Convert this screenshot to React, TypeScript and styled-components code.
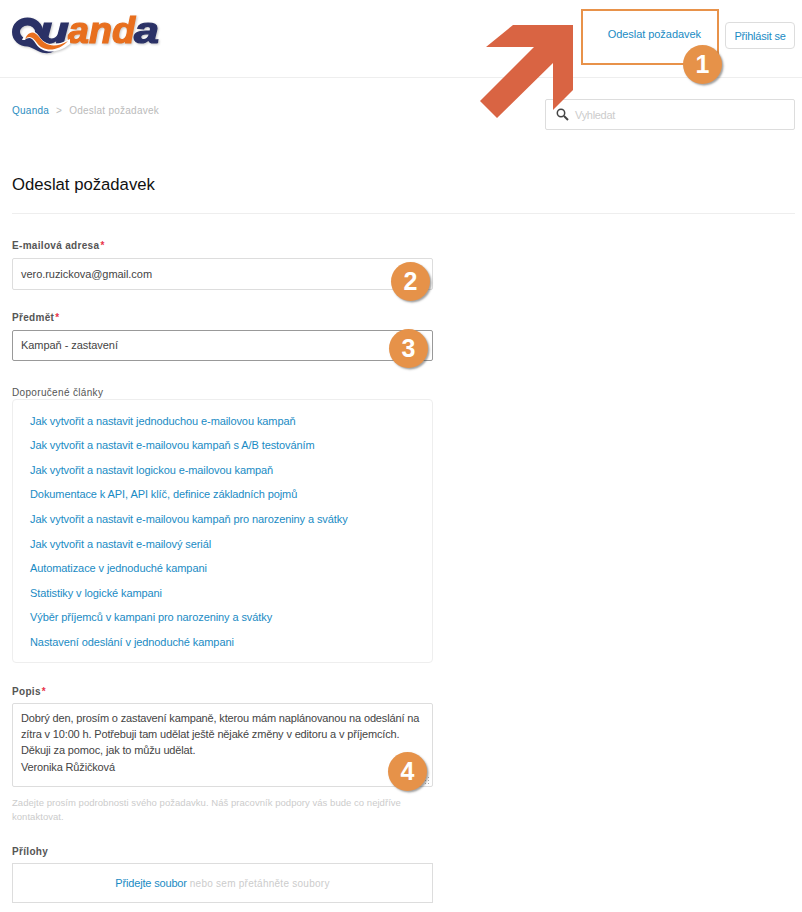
import styled, { createGlobalStyle } from "styled-components";

const GlobalStyle = createGlobalStyle`
  html, body {
    margin: 0;
    background: #fff;
    height: 912px;
    overflow: hidden;
  }
  body {
    font-family: "Liberation Sans", Arial, sans-serif;
    font-size: 11px;
    color: #444;
  }
  * { box-sizing: border-box; }
`;

const Page = styled.div`
  position: relative;
  width: 802px;
  height: 912px;
  overflow: hidden;
`;

const Header = styled.header`
  height: 78px;
  border-bottom: 1px solid #eee;
  display: flex;
  align-items: flex-start;
  justify-content: space-between;
  padding: 0 7px 0 12px;
`;

const LogoWrap = styled.div`
  padding-top: 8px;

  svg {
    display: block;
    filter: drop-shadow(1px 1px 1px rgba(0, 0, 0, 0.22));
  }
`;

const Nav = styled.nav`
  display: flex;
  align-items: flex-start;
`;

const NavLink = styled.a`
  color: #1a8bc4;
  font-size: 11px;
  letter-spacing: -0.05px;
  margin-top: 28px;
  margin-right: 24px;
`;

const LoginButton = styled.button`
  margin-top: 22px;
  width: 70px;
  height: 27px;
  border: 1px solid #ddd;
  border-radius: 4px;
  background: #fff;
  color: #1a8bc4;
  font-family: inherit;
  font-size: 11px;
  letter-spacing: -0.22px;
  padding: 0;
`;

const SubBar = styled.div`
  display: flex;
  justify-content: space-between;
  padding: 21px 7px 0 12px;
`;

const Crumbs = styled.div`
  display: flex;
  gap: 7px;
  padding-top: 6px;
  font-size: 10px;
  letter-spacing: 0.25px;
  color: #bbb;
  line-height: 12px;
`;

const CrumbLink = styled.a`
  color: #2d8ebf;
`;

const SearchBox = styled.div`
  position: relative;
  width: 250px;
  height: 31px;
  border: 1px solid #ddd;
  border-radius: 2px;
  display: flex;
  align-items: center;
  gap: 6px;
  padding-left: 10px;
  color: #ccc;
  font-size: 11px;
  letter-spacing: -0.3px;
`;

const Main = styled.main`
  padding: 0 7px 0 12px;
`;

const Title = styled.h1`
  margin: 45px 0 0;
  height: 39px;
  border-bottom: 1px solid #eee;
  font-size: 16.7px;
  font-weight: 400;
  line-height: 20px;
  color: #111;
`;

const Form = styled.form`
  width: 421px;
  padding-top: 26px;
`;

const Label = styled.label<{ $plain?: boolean }>`
  display: block;
  font-size: 10px;
  line-height: 12px;
  letter-spacing: ${(p) => (p.$plain ? 0.33 : 0.32)}px;
  font-weight: ${(p) => (p.$plain ? 400 : 700)};
  color: #555;
`;

const Req = styled.span`
  color: #e8334a;
  margin-left: 1px;
`;

const Field = styled.div<{ $focused?: boolean; $h: number }>`
  height: ${(p) => p.$h}px;
  margin-top: 6px;
  border: 1px solid ${(p) => (p.$focused ? "#999" : "#ddd")};
  border-radius: 2px;
  padding: 0 8px 1px;
  display: flex;
  align-items: center;
  font-size: 11px;
  letter-spacing: -0.05px;
  color: #444;
`;

const Group = styled.div<{ $top: number }>`
  margin-top: ${(p) => p.$top}px;
`;

const Articles = styled.div`
  height: 264px;
  border: 1px solid #eee;
  border-radius: 4px;
  padding: 8.6px 17px 8px;
  display: flex;
  flex-direction: column;
  justify-content: space-between;
`;

const ArticleLink = styled.a`
  color: #1a8bc4;
  font-size: 11px;
  line-height: 24px;
  letter-spacing: -0.09px;
`;

const TextArea = styled.div`
  position: relative;
  height: 84px;
  margin-top: 5px;
  border: 1px solid #ddd;
  border-radius: 2px;
  padding: 6px 8px;
  font-size: 11px;
  line-height: 16.2px;
  letter-spacing: -0.15px;
  color: #444;
`;

const Grip = styled.span`
  position: absolute;
  right: 1px;
  bottom: 1px;
  width: 7px;
  height: 9px;
  background-image: radial-gradient(#aaa 1px, transparent 1px);
  background-size: 3px 3px;
`;

const Hint = styled.p`
  margin: 9px 0 0;
  font-size: 9.5px;
  line-height: 14px;
  letter-spacing: 0.04px;
  color: #ccc;
`;

const DropZone = styled.div`
  height: 40px;
  margin-top: 5px;
  border: 1px solid #ddd;
  display: flex;
  align-items: center;
  justify-content: center;
  gap: 3px;
  font-size: 10px;
  letter-spacing: 0.26px;
  color: #ccc;
`;

const DropLink = styled.a`
  color: #1a8bc4;
  font-size: 11px;
  letter-spacing: -0.17px;
`;

const Highlight = styled.div`
  position: absolute;
  left: 581px;
  top: 9px;
  width: 138px;
  height: 56px;
  border: 2px solid #e8924a;
`;

const Arrow = styled.svg`
  position: absolute;
  left: 480px;
  top: 24px;
`;

const Badge = styled.div<{ $x: number; $y: number }>`
  position: absolute;
  left: ${(p) => p.$x}px;
  top: ${(p) => p.$y}px;
  width: 39px;
  height: 39px;
  border-radius: 50%;
  background: #e69249;
  color: #fff;
  font-size: 25px;
  font-weight: 700;
  display: flex;
  align-items: center;
  justify-content: center;
  box-shadow: 1.5px 1.5px 2px rgba(70, 70, 70, 0.5);
`;

const LogoLetters = styled.text<{ $color: string }>`
  font-family: "Liberation Sans", sans-serif;
  font-style: italic;
  font-weight: 700;
  font-size: 36px;
  fill: ${(p) => p.$color};
  stroke: ${(p) => p.$color};
  stroke-width: 1.2px;
`;

const articles = [
  "Jak vytvořit a nastavit jednoduchou e-mailovou kampaň",
  "Jak vytvořit a nastavit e-mailovou kampaň s A/B testováním",
  "Jak vytvořit a nastavit logickou e-mailovou kampaň",
  "Dokumentace k API, API klíč, definice základních pojmů",
  "Jak vytvořit a nastavit e-mailovou kampaň pro narozeniny a svátky",
  "Jak vytvořit a nastavit e-mailový seriál",
  "Automatizace v jednoduché kampani",
  "Statistiky v logické kampani",
  "Výběr příjemců v kampani pro narozeniny a svátky",
  "Nastavení odeslání v jednoduché kampani",
];

function Logo() {
  return (
    <svg width="152" height="54" viewBox="0 -7 152 54">
      <LogoLetters $color="#2a3166" x="27" y="28" textLength="30" lengthAdjust="spacingAndGlyphs">u</LogoLetters>
      <LogoLetters $color="#e86f1e" x="56" y="28" textLength="67" lengthAdjust="spacingAndGlyphs">and</LogoLetters>
      <LogoLetters $color="#2a3166" x="122" y="28" textLength="25" lengthAdjust="spacingAndGlyphs">a</LogoLetters>
      <ellipse cx="15.5" cy="17" rx="11.5" ry="10.5" fill="none" stroke="#2a3166" strokeWidth="8" />
      <path d="M8 28C14 30 20 33 26 36 32 39 38 39 42 36L38 28 24 20z" fill="#2a3166" />
      <path d="M10 25C15 13 22 14 27 21 32 29 40 33 58 24L58 29C44 40 30 38 24 29 20 22 16 21 13 25z" fill="#fff" />
      <path d="M13 24C17 15 23 16 28 23 33 30 42 34 56 26 46 37 31 37 25 28 21 22 17 20 13 24z" fill="#e86f1e" />
    </svg>
  );
}

function App() {
  return (
    <Page>
      <GlobalStyle />
      <Header>
        <LogoWrap>
          <Logo />
        </LogoWrap>
        <Nav>
          <NavLink>Odeslat požadavek</NavLink>
          <LoginButton>Přihlásit se</LoginButton>
        </Nav>
      </Header>
      <SubBar>
        <Crumbs>
          <CrumbLink>Quanda</CrumbLink>
          <span>&gt;</span>
          <span>Odeslat požadavek</span>
        </Crumbs>
        <SearchBox>
          <svg width="13" height="13" viewBox="0 0 13 13">
            <circle cx="5" cy="5" r="3.7" fill="none" stroke="#444" strokeWidth="1.5" />
            <path d="M8 8l4 4" stroke="#444" strokeWidth="2" />
          </svg>
          Vyhledat
        </SearchBox>
      </SubBar>
      <Main>
        <Title>Odeslat požadavek</Title>
        <Form>
          <Label>
            E-mailová adresa<Req>*</Req>
          </Label>
          <Field $h={32}>vero.ruzickova@gmail.com</Field>
          <Group $top={22}>
            <Label>
              Předmět<Req>*</Req>
            </Label>
            <Field $h={31} $focused>
              Kampaň - zastavení
            </Field>
          </Group>
          <Group $top={26}>
            <Label $plain>Doporučené články</Label>
            <Articles>
              {articles.map((a) => (
                <ArticleLink key={a}>{a}</ArticleLink>
              ))}
            </Articles>
          </Group>
          <Group $top={23}>
            <Label>
              Popis<Req>*</Req>
            </Label>
            <TextArea>
              Dobrý den, prosím o zastavení kampaně, kterou mám naplánovanou na odeslání na
              <br />
              zítra v 10:00 h. Potřebuji tam udělat ještě nějaké změny v editoru a v příjemcích.
              <br />
              Děkuji za pomoc, jak to můžu udělat.
              <br />
              Veronika Růžičková
              <Grip />
            </TextArea>
            <Hint>
              Zadejte prosím podrobnosti svého požadavku. Náš pracovník podpory vás bude co nejdříve
              kontaktovat.
            </Hint>
          </Group>
          <Group $top={22}>
            <Label>Přílohy</Label>
            <DropZone>
              <DropLink>Přidejte soubor</DropLink> nebo sem přetáhněte soubory
            </DropZone>
          </Group>
        </Form>
      </Main>

      <Highlight />
      <Arrow width="100" height="96" viewBox="0 0 100 96">
        <path d="M33 1H93V66L73 86V39L17 94 0 77 54 23H6z" fill="#d96443" />
      </Arrow>
      <Badge $x={683} $y={45}>1</Badge>
      <Badge $x={391} $y={262}>2</Badge>
      <Badge $x={389} $y={329}>3</Badge>
      <Badge $x={388} $y={752}>4</Badge>
    </Page>
  );
}

export default App;
